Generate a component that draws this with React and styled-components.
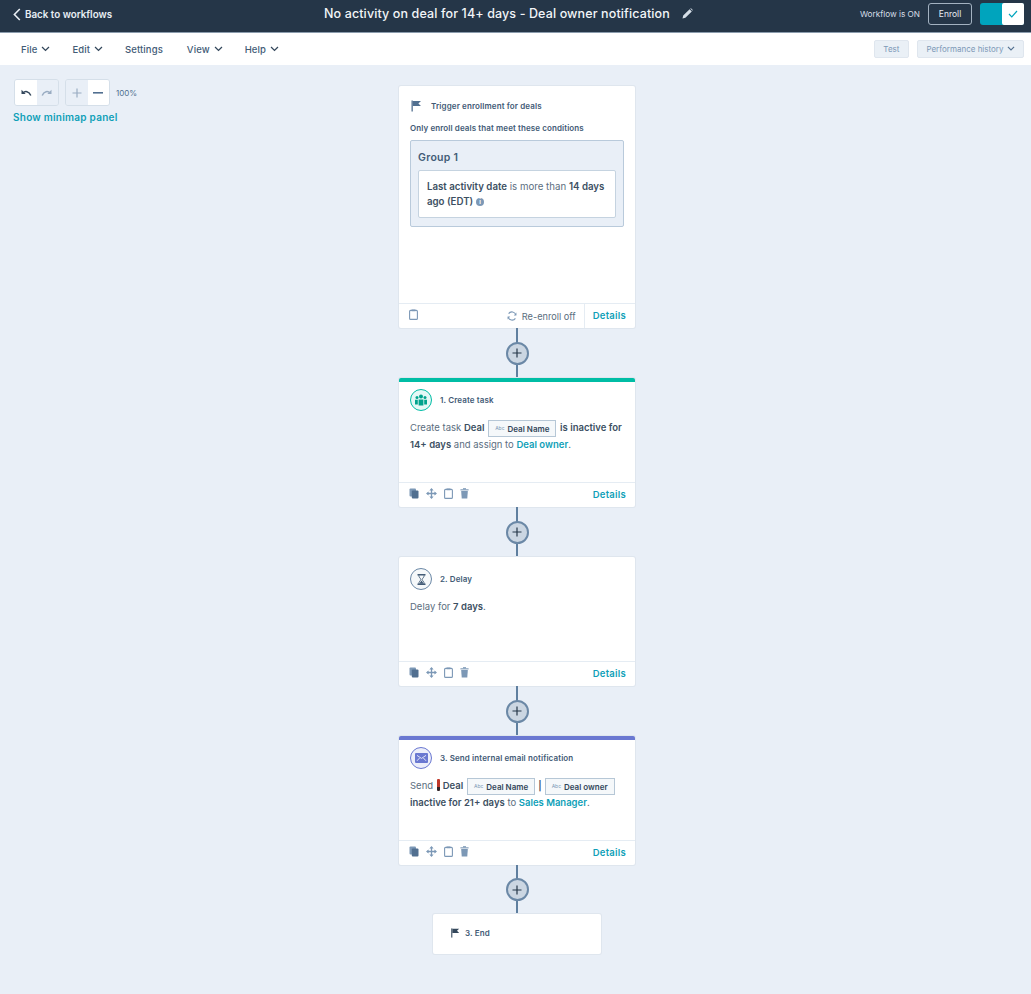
import React from 'react'
import styled, { createGlobalStyle } from 'styled-components'

const GlobalStyle = createGlobalStyle`
  html, body { margin: 0; padding: 0; background: #e9eff7; }
  body { font-family: "Inter", "Liberation Sans", sans-serif; color: #33475b; }
  * { box-sizing: border-box; }
`

const FlagIcon = ({ size = 12, color = '#516f90' }) => (
  <svg width={size} height={size} viewBox="0 0 12 12">
    <rect x="1.5" y="0.5" width="1.3" height="11" fill={color} />
    <path d="M2.8 1 L11 1 L8.4 3.4 L11 6 L2.8 6 Z" fill={color} />
  </svg>
)

const Chevron = ({ color = '#33475b', size = 9 }) => (
  <svg width={size} height={size * 0.66} viewBox="0 0 9 6" fill="none">
    <path d="M1 1 L4.5 4.5 L8 1" stroke={color} strokeWidth="1.3" />
  </svg>
)

const CopyIcon = () => (
  <svg width="10" height="11" viewBox="0 0 10 11">
    <rect x="0.5" y="0.5" width="6.5" height="8" rx="1" fill="#7c98b6" />
    <rect x="2.8" y="2.5" width="6.7" height="8" rx="1" fill="#516f90" />
  </svg>
)

const MoveIcon = () => (
  <svg width="11" height="11" viewBox="0 0 11 11" fill="none">
    <path d="M5.5 1 V10 M1 5.5 H10" stroke="#7c98b6" strokeWidth="1.3" />
    <path d="M3.4 2.6 L5.5 0 L7.6 2.6 Z M3.4 8.4 L5.5 11 L7.6 8.4 Z M2.6 3.4 L0 5.5 L2.6 7.6 Z M8.4 3.4 L11 5.5 L8.4 7.6 Z" fill="#7c98b6" />
  </svg>
)

const ClipIcon = () => (
  <svg width="9" height="11" viewBox="0 0 9 11" fill="none">
    <rect x="0.6" y="1.4" width="7.8" height="9" rx="1" stroke="#7c98b6" strokeWidth="1.1" />
    <rect x="2.4" y="0.4" width="4.2" height="1.8" rx="0.5" fill="#7c98b6" />
  </svg>
)

const TrashIcon = () => (
  <svg width="9" height="11" viewBox="0 0 9 11">
    <rect x="0.4" y="1.3" width="8.2" height="1.1" fill="#7c98b6" />
    <rect x="3" y="0.2" width="3" height="1.2" fill="#7c98b6" />
    <path d="M1.2 3 H7.8 L7.3 10.6 H1.7 Z" fill="#7c98b6" />
  </svg>
)

const SyncIcon = () => (
  <svg width="10" height="10" viewBox="0 0 10 10" fill="none">
    <path d="M8.8 4 A4 4 0 0 0 1.6 2.6 M1.2 6 A4 4 0 0 0 8.4 7.4" stroke="#7c98b6" strokeWidth="1.1" />
    <path d="M9.4 1.6 V4.4 H6.8 Z M0.6 8.4 V5.6 H3.2 Z" fill="#7c98b6" />
  </svg>
)

const Page = styled.div`
  width: 1031px;
  height: 994px;
  overflow: hidden;
  background: #e9eff7;
`

const TopBar = styled.header`
  height: 33px;
  background: #253648;
  border-bottom: 1px solid #8b9cad;
  display: grid;
  grid-template-columns: 324px 1fr auto;
  align-items: center;
  padding: 0 7px 0 13px;
`

const BackLink = styled.a`
  display: flex;
  align-items: center;
  gap: 4px;
  font-size: 9.8px;
  font-weight: 600;
  color: #e8eef4;
  margin-top: -4px;
`

const TitleRow = styled.div`
  display: flex;
  align-items: center;
  gap: 12px;
  margin-top: -5px;
  margin-left: -13px;
`

const Title = styled.h1`
  margin: 0;
  font-size: 12.5px;
  font-weight: 500;
  color: #f2f5f8;
  white-space: nowrap;
  letter-spacing: 0.12px;
`

const TopActions = styled.div`
  display: flex;
  align-items: center;
  margin-top: -5px;
`

const StatusText = styled.span`
  font-size: 8.2px;
  color: #d5dee7;
  margin-right: 8px;
`

const EnrollButton = styled.button`
  width: 44px;
  height: 22px;
  border: 1px solid #a3b2c1;
  border-radius: 3px;
  background: transparent;
  color: #e6ecf2;
  font: inherit;
  font-size: 8.5px;
  padding: 0;
  margin-right: 8px;
`

const Toggle = styled.div`
  width: 44px;
  height: 22px;
  background: #00a4bd;
  border-radius: 3px;
  display: flex;
  justify-content: flex-end;
`

const ToggleKnob = styled.div`
  width: 22px;
  height: 22px;
  background: #ffffff;
  border-radius: 2px;
  display: flex;
  align-items: center;
  justify-content: center;
`

const MenuBar = styled.nav`
  height: 32px;
  background: #ffffff;
  display: flex;
  align-items: center;
  justify-content: space-between;
  padding: 0 7px 0 21px;
`

const MenuList = styled.div`
  display: flex;
  align-items: center;
  gap: 22px;
`

const MenuItem = styled.span`
  display: flex;
  align-items: center;
  gap: 4px;
  font-size: 9.5px;
  font-weight: 500;
  color: #425b76;
  letter-spacing: 0.1px;
  margin-right: ${(p) => p.$after || 0}px;
`

const MenuActions = styled.div`
  display: flex;
  gap: 8px;
`

const GhostButton = styled.button`
  height: 18px;
  padding: 0 8.5px;
  display: flex;
  align-items: center;
  gap: 3px;
  background: #eaf0f6;
  border: 1px solid #dfe6ee;
  border-radius: 2px;
  color: #7c98b6;
  font: inherit;
  font-size: 8px;
`

const Canvas = styled.main`
  display: flex;
  align-items: flex-start;
`

const ToolPanel = styled.aside`
  width: 399px;
  flex: none;
  padding: 14px 0 0 13px;
`

const ToolRow = styled.div`
  display: flex;
  align-items: center;
  gap: 6px;
  margin-left: 1px;
`

const ToolGroup = styled.div`
  display: flex;
  height: 27px;
  border: 1px solid #d5dfe9;
  border-radius: 3px;
  overflow: hidden;
`

const ToolButton = styled.div`
  width: 21.5px;
  display: flex;
  align-items: center;
  justify-content: center;
  background: ${(p) => (p.$on ? '#ffffff' : '#e9eff7')};
`

const ZoomText = styled.span`
  font-size: 8px;
  color: #516f90;
`

const MapLink = styled.a`
  display: block;
  margin-top: 5px;
  font-size: 10px;
  font-weight: 600;
  color: #0f9fb8;
  letter-spacing: 0.25px;
`

const Flow = styled.div`
  width: 236px;
  padding-top: 21px;
  display: flex;
  flex-direction: column;
  align-items: center;
`

const Card = styled.section`
  width: ${(p) => p.$width || 236}px;
  height: ${(p) => p.$height}px;
  flex: none;
  background: #ffffff;
  border-radius: 2px;
  box-shadow: 0 0 0 1px #dfe6ee;
  border-top: ${(p) => (p.$accent ? `4px solid ${p.$accent}` : 'none')};
  display: flex;
  flex-direction: column;
`

const CardBody = styled.div`
  flex: 1;
  padding: ${(p) => p.$top}px 11px 0;
`

const CardHead = styled.div`
  display: flex;
  align-items: center;
  gap: ${(p) => p.$gap || 8}px;
  height: 22px;
  margin-bottom: ${(p) => p.$below || 9}px;
`

const CardTitle = styled.span`
  font-size: 8px;
  font-weight: 600;
  color: #425b76;
  letter-spacing: 0.12px;
`

const Badge = styled.div`
  width: 22px;
  height: 22px;
  border-radius: 50%;
  flex: none;
  display: flex;
  align-items: center;
  justify-content: center;
  border: 1px solid ${(p) => p.$color};
  background: ${(p) => p.$bg};
`

const Description = styled.p`
  margin: 0;
  font-size: 9.5px;
  line-height: 16.5px;
  color: #5b6e80;
`

const Strong = styled.b`
  font-weight: 600;
  color: #3c4f62;
`

const TealLink = styled.a`
  font-weight: 600;
  color: #0f9fb8;
`

const Token = styled.span`
  display: inline-flex;
  align-items: center;
  gap: 3px;
  height: 17px;
  padding: 0 6px;
  margin: 0 1px;
  vertical-align: middle;
  background: #f5f8fa;
  border: 1px solid #b6c7d6;
  font-size: 8px;
  font-weight: 600;
  color: #33475b;
  line-height: 1;
`

const TokenMark = styled.i`
  font-style: normal;
  font-size: 5px;
  font-weight: 400;
  color: #7c98b6;
`

const TokenBar = styled.b`
  font-weight: 600;
  color: #3c4f62;
  margin: 0 2px;
`

const CardFooter = styled.footer`
  height: 25px;
  flex: none;
  border-top: 1px solid #e5ecf3;
  display: flex;
  align-items: center;
  justify-content: space-between;
  padding-left: 10px;
`

const FooterIcons = styled.div`
  display: flex;
  align-items: center;
  gap: 7px;
  margin-top: -4px;
`

const FooterRight = styled.div`
  display: flex;
  align-items: center;
  height: 100%;
`

const Reenroll = styled.span`
  display: flex;
  align-items: center;
  gap: 5px;
  font-size: 9.2px;
  color: #5b6e80;
  padding-right: 8px;
`

const DetailsLink = styled.a`
  font-size: 9.5px;
  font-weight: 600;
  color: #0f9fb8;
  letter-spacing: 0.25px;
  height: 100%;
  display: flex;
  align-items: center;
  padding: 0 9px 2px 8px;
  border-left: ${(p) => (p.$divided ? '1px solid #e5ecf3' : 'none')};
`

const SubHead = styled.div`
  font-size: 8px;
  font-weight: 600;
  color: #425b76;
  margin-bottom: 7px;
  letter-spacing: 0.1px;
`

const GroupBox = styled.div`
  background: #e9eff7;
  border: 1px solid #b9cadb;
  border-radius: 2px;
  padding: 10px 7px 8px;
`

const GroupName = styled.div`
  font-size: 10.5px;
  font-weight: 600;
  color: #425b76;
  margin-bottom: 6px;
  letter-spacing: 0.3px;
`

const Condition = styled.div`
  background: #ffffff;
  border: 1px solid #c5d3e0;
  border-radius: 2px;
  padding: 8px 6px 8px 8px;
  height: 48px;
  font-size: 9.7px;
  line-height: 15px;
  color: #5b6e80;
`

const InfoDot = styled.span`
  display: inline-block;
  width: 8px;
  height: 8px;
  margin-left: 3px;
  border-radius: 50%;
  background: #7c98b6;
  color: #ffffff;
  font-size: 6px;
  line-height: 8px;
  font-weight: 700;
  text-align: center;
  vertical-align: middle;
`

const Connector = styled.div`
  height: ${(p) => p.$height || 50}px;
  width: 24px;
  flex: none;
  display: flex;
  flex-direction: column;
  align-items: center;
  justify-content: center;
  background: linear-gradient(#5f7f9f, #5f7f9f) center / 2px 100% no-repeat;
`

const PlusButton = styled.div`
  width: 23px;
  height: 23px;
  border-radius: 50%;
  background: #cbd6e2;
  border: 2px solid #6b88a6;
  color: #253648;
  display: flex;
  align-items: center;
  justify-content: center;
`

const EndRow = styled.div`
  height: 100%;
  display: flex;
  align-items: center;
  gap: 5px;
  padding: 0 0 2px 17px;
`

const Excl = styled.span`
  display: inline-block;
  width: 3px;
  height: 12px;
  margin: 0 3px 0 1px;
  vertical-align: -2px;
  background: linear-gradient(#c0392b 70%, #33262a 70%);
  border-radius: 1px;
`

const PlusIcon = () => (
  <svg width="10" height="10" viewBox="0 0 10 10">
    <path d="M5 0.5 V9.5 M0.5 5 H9.5" stroke="currentColor" strokeWidth="1.2" />
  </svg>
)

const Link = ({ height }) => (
  <Connector $height={height}>
    <PlusButton>
      <PlusIcon />
    </PlusButton>
  </Connector>
)

const ActionFooter = () => (
  <CardFooter>
    <FooterIcons>
      <CopyIcon />
      <MoveIcon />
      <ClipIcon />
      <TrashIcon />
    </FooterIcons>
    <DetailsLink>Details</DetailsLink>
  </CardFooter>
)

const DealToken = ({ children }) => (
  <Token>
    <TokenMark>Abc</TokenMark>
    {children}
  </Token>
)

function App() {
  return (
    <Page>
      <GlobalStyle />
      <TopBar>
        <BackLink>
          <svg width="8" height="13" viewBox="0 0 8 13" fill="none">
            <path d="M6.8 1 L1.4 6.5 L6.8 12" stroke="#e8eef4" strokeWidth="1.6" />
          </svg>
          Back to workflows
        </BackLink>
        <TitleRow>
          <Title>No activity on deal for 14+ days - Deal owner notification</Title>
          <svg width="11" height="11" viewBox="0 0 11 11">
            <path d="M0.5 10.5 L1.2 7.6 L7.6 1.2 L9.8 3.4 L3.4 9.8 Z M8.2 0.6 L9 0.2 L10.8 2 L10.4 2.8 Z" fill="#d5dee7" />
          </svg>
        </TitleRow>
        <TopActions>
          <StatusText>Workflow is ON</StatusText>
          <EnrollButton>Enroll</EnrollButton>
          <Toggle>
            <ToggleKnob>
              <svg width="10" height="8" viewBox="0 0 10 8" fill="none">
                <path d="M1 4 L3.8 6.8 L9 1" stroke="#00a4bd" strokeWidth="1.2" />
              </svg>
            </ToggleKnob>
          </Toggle>
        </TopActions>
      </TopBar>
      <MenuBar>
        <MenuList>
          <MenuItem>File <Chevron /></MenuItem>
          <MenuItem>Edit <Chevron /></MenuItem>
          <MenuItem $after={2}>Settings</MenuItem>
          <MenuItem>View <Chevron /></MenuItem>
          <MenuItem>Help <Chevron /></MenuItem>
        </MenuList>
        <MenuActions>
          <GhostButton>Test</GhostButton>
          <GhostButton>Performance history <Chevron color="#516f90" size={8} /></GhostButton>
        </MenuActions>
      </MenuBar>
      <Canvas>
        <ToolPanel>
          <ToolRow>
            <ToolGroup>
              <ToolButton $on>
                <svg width="12" height="8" viewBox="0 0 12 8" fill="none">
                  <path d="M1.5 0.8 V5 H5.7 Z" fill="#33475b" />
                  <path d="M3 4 C5 1.8 9 2 10.8 6.5" stroke="#33475b" strokeWidth="1.5" />
                </svg>
              </ToolButton>
              <ToolButton>
                <svg width="12" height="8" viewBox="0 0 12 8" fill="none">
                  <path d="M10.5 0.8 V5 H6.3 Z" fill="#99acc2" />
                  <path d="M9 4 C7 1.8 3 2 1.2 6.5" stroke="#99acc2" strokeWidth="1.5" />
                </svg>
              </ToolButton>
            </ToolGroup>
            <ToolGroup>
              <ToolButton>
                <svg width="10" height="10" viewBox="0 0 10 10">
                  <path d="M5 0.5 V9.5 M0.5 5 H9.5" stroke="#99acc2" strokeWidth="1.2" />
                </svg>
              </ToolButton>
              <ToolButton $on>
                <svg width="10" height="2" viewBox="0 0 10 2">
                  <rect width="10" height="1.6" fill="#516f90" />
                </svg>
              </ToolButton>
            </ToolGroup>
            <ZoomText>100%</ZoomText>
          </ToolRow>
          <MapLink>Show minimap panel</MapLink>
        </ToolPanel>
        <Flow>
          <Card $height={242}>
            <CardBody $top={9}>
              <CardHead $gap={9} $below={6}>
                <FlagIcon />
                <CardTitle>Trigger enrollment for deals</CardTitle>
              </CardHead>
              <SubHead>Only enroll deals that meet these conditions</SubHead>
              <GroupBox>
                <GroupName>Group 1</GroupName>
                <Condition>
                  <Strong>Last activity date</Strong> is more than <Strong>14 days</Strong> <Strong>ago (EDT)</Strong>
                  <InfoDot>i</InfoDot>
                </Condition>
              </GroupBox>
            </CardBody>
            <CardFooter>
              <FooterIcons>
                <ClipIcon />
              </FooterIcons>
              <FooterRight>
                <Reenroll>
                  <SyncIcon />
                  Re-enroll off
                </Reenroll>
                <DetailsLink $divided>Details</DetailsLink>
              </FooterRight>
            </CardFooter>
          </Card>
          <Link />
          <Card $height={129} $accent="#00bda5">
            <CardBody $top={7}>
              <CardHead>
                <Badge $color="#00bda5" $bg="#e5f8f6">
                  <svg width="14" height="12" viewBox="0 0 14 12">
                    <circle cx="7" cy="2.4" r="2" fill="#00a38d" />
                    <circle cx="3" cy="3.6" r="1.5" fill="#00a38d" />
                    <circle cx="11" cy="3.6" r="1.5" fill="#00a38d" />
                    <path d="M4.6 5.4 H9.4 V11.5 H4.6 Z M1 5.8 H3.8 V10.5 H1 Z M10.2 5.8 H13 V10.5 H10.2 Z" fill="#00a38d" />
                  </svg>
                </Badge>
                <CardTitle>1. Create task</CardTitle>
              </CardHead>
              <Description>
                Create task <Strong>Deal</Strong> <DealToken>Deal Name</DealToken> <Strong>is inactive for</Strong> <Strong>14+ days</Strong> and assign to <TealLink>Deal owner</TealLink>.
              </Description>
            </CardBody>
            <ActionFooter />
          </Card>
          <Link />
          <Card $height={129}>
            <CardBody $top={11}>
              <CardHead>
                <Badge $color="#6b88a6" $bg="#f5f8fa">
                  <svg width="9" height="11" viewBox="0 0 9 11" fill="none">
                    <path d="M0.5 0.8 H8.5 M0.5 10.2 H8.5" stroke="#425b76" strokeWidth="1.4" />
                    <path d="M1.8 1.2 C1.8 3.6 3.8 4.4 3.8 5.5 C3.8 6.6 1.8 7.4 1.8 9.8 M7.2 1.2 C7.2 3.6 5.2 4.4 5.2 5.5 C5.2 6.6 7.2 7.4 7.2 9.8" stroke="#425b76" strokeWidth="0.9" />
                    <path d="M4.5 6.6 L6.8 9.8 H2.2 Z" fill="#425b76" />
                  </svg>
                </Badge>
                <CardTitle>2. Delay</CardTitle>
              </CardHead>
              <Description>
                Delay for <Strong>7 days</Strong>.
              </Description>
            </CardBody>
            <ActionFooter />
          </Card>
          <Link />
          <Card $height={129} $accent="#6a78d1">
            <CardBody $top={7}>
              <CardHead>
                <Badge $color="#6a78d1" $bg="#eceefa">
                  <svg width="13" height="10" viewBox="0 0 13 10">
                    <rect width="13" height="10" rx="1" fill="#6a78d1" />
                    <path d="M2 2.4 L6.5 5.4 L11 2.4 M2 7.8 L4.6 5 M11 7.8 L8.4 5" stroke="#ffffff" strokeWidth="0.8" fill="none" />
                  </svg>
                </Badge>
                <CardTitle>3. Send internal email notification</CardTitle>
              </CardHead>
              <Description>
                Send <Excl /><Strong>Deal</Strong> <DealToken>Deal Name</DealToken><TokenBar>|</TokenBar><DealToken>Deal owner</DealToken> <Strong>inactive for 21+ days</Strong> to <TealLink>Sales Manager</TealLink>.
              </Description>
            </CardBody>
            <ActionFooter />
          </Card>
          <Link height={49} />
          <Card $height={40} $width={168}>
            <EndRow>
              <FlagIcon size={10} color="#33475b" />
              <CardTitle>3. End</CardTitle>
            </EndRow>
          </Card>
        </Flow>
      </Canvas>
    </Page>
  )
}

export default App
